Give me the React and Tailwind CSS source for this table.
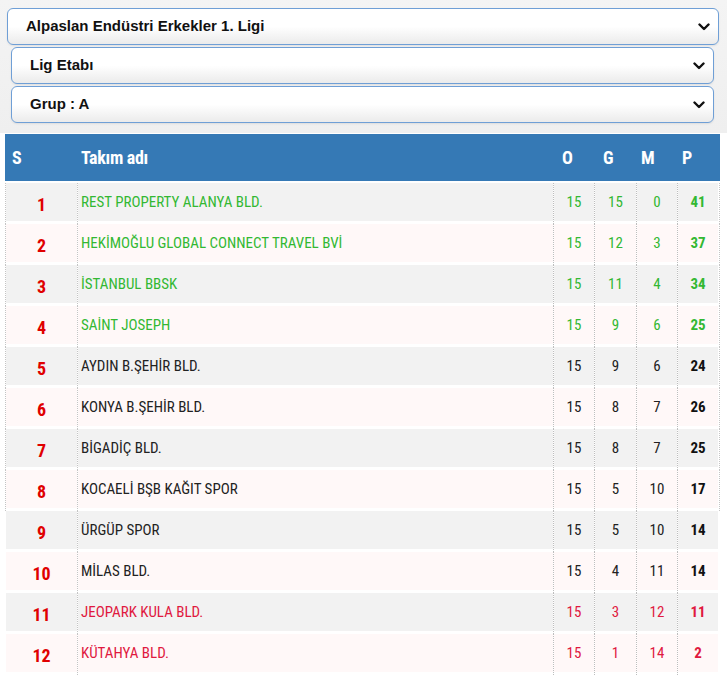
import React from "react";

const takimlar = [
  { s: 1, ad: "REST PROPERTY ALANYA BLD.", o: 15, g: 15, m: 0, p: 41, renk: "yesil" },
  { s: 2, ad: "HEKİMOĞLU GLOBAL CONNECT TRAVEL BVİ", o: 15, g: 12, m: 3, p: 37, renk: "yesil" },
  { s: 3, ad: "İSTANBUL BBSK", o: 15, g: 11, m: 4, p: 34, renk: "yesil" },
  { s: 4, ad: "SAİNT JOSEPH", o: 15, g: 9, m: 6, p: 25, renk: "yesil" },
  { s: 5, ad: "AYDIN B.ŞEHİR BLD.", o: 15, g: 9, m: 6, p: 24, renk: "" },
  { s: 6, ad: "KONYA B.ŞEHİR BLD.", o: 15, g: 8, m: 7, p: 26, renk: "" },
  { s: 7, ad: "BİGADİÇ BLD.", o: 15, g: 8, m: 7, p: 25, renk: "" },
  { s: 8, ad: "KOCAELİ BŞB KAĞIT SPOR", o: 15, g: 5, m: 10, p: 17, renk: "" },
  { s: 9, ad: "ÜRGÜP SPOR", o: 15, g: 5, m: 10, p: 14, renk: "" },
  { s: 10, ad: "MİLAS BLD.", o: 15, g: 4, m: 11, p: 14, renk: "" },
  { s: 11, ad: "JEOPARK KULA BLD.", o: 15, g: 3, m: 12, p: 11, renk: "kirmizi" },
  { s: 12, ad: "KÜTAHYA BLD.", o: 15, g: 1, m: 14, p: 2, renk: "kirmizi" },
];

const Chevron = () => (
  <svg width="12" height="8" viewBox="0 0 12 8">
    <path d="M1.5 1.5 L6 6 L10.5 1.5" fill="none" stroke="#111" strokeWidth="2.4" strokeLinecap="round" strokeLinejoin="round" />
  </svg>
);

const Secim = ({ text, className }) => (
  <div className={"flex items-center justify-between h-[37px] rounded-[6px] border border-[#6f9fd6] bg-gradient-to-b from-white via-white to-[#ebebeb] shadow-[0_1px_2px_rgba(0,0,0,0.08)] pl-[18px] pr-[8px] " + className}>
    <span className="text-[15px] font-bold text-[#111] font-['Liberation_Sans',Arial,sans-serif] font-stretch-normal">{text}</span>
    <Chevron />
  </div>
);

export default function App() {
  return (
    <div className="w-[727px] h-[680px] bg-white font-['Roboto',sans-serif] font-stretch-condensed overflow-hidden">
      <div className="bg-gradient-to-b from-[#f4f4f4] to-[#efefef] pt-[8px] pb-[10px] flex flex-col gap-[2px]">
        <Secim text="Alpaslan Endüstri Erkekler 1. Ligi" className="ml-[7px] mr-[8px]" />
        <Secim text="Lig Etabı" className="ml-[11px] mr-[13px]" />
        <Secim text="Grup : A" className="ml-[11px] mr-[13px]" />
      </div>

      <div className="ml-[5px] w-[715px] h-[47px] mt-[1px] bg-[#3579b5] grid grid-cols-[72px_476px_41px_42px_41px_43px] items-center text-white font-bold text-[18px] tracking-[-0.3px]">
        <div className="pl-[7px]">S</div>
        <div className="pl-[4px]">Takım adı</div>
        <div className="pl-[9px]">O</div>
        <div className="pl-[9px]">G</div>
        <div className="pl-[5px]">M</div>
        <div className="pl-[5px]">P</div>
      </div>

      <div className="ml-[5px] mt-[2px] w-[715px]">
        {takimlar.map((t, i) => {
          const bg = i % 2 === 0 ? "bg-[#f2f2f2]" : "bg-[#fff8f8]";
          const renk =
            t.renk === "yesil" ? "text-[#33b833]" : t.renk === "kirmizi" ? "text-[#e0193f]" : "text-[#222]";
          const dis = i < 8 ? "border-[#c4c4c4]" : "border-transparent";
          const hucre = "h-[41px] pb-[3px] bg-clip-content flex items-center " + bg;
          return (
            <div key={t.s} className="grid grid-cols-[72px_476px_41px_42px_41px_41px_2px] text-[15px]">
              <div className={hucre + " justify-center border-l border-dotted " + dis}>
                <div className="h-[38px] w-full flex items-center justify-center pt-[5px] text-[#e00000] font-bold text-[18px]">{t.s}</div>
              </div>
              <div className={hucre + " border-l border-dotted border-[#c4c4c4]"}>
                <div className={"h-[38px] flex items-center pl-[3px] " + renk}>{t.ad}</div>
              </div>
              {[t.o, t.g, t.m].map((v, k) => (
                <div key={k} className={hucre + " justify-center border-l border-dotted border-[#bdbdbd]"}>
                  <div className={"h-[38px] w-full flex items-center justify-center " + renk}>{v}</div>
                </div>
              ))}
              <div className={hucre + " justify-center border-l border-dotted border-[#bdbdbd]"}>
                <div className={"h-[38px] w-full flex items-center justify-center font-bold " + (t.renk ? renk : "text-[#111]")}>{t.p}</div>
              </div>
              <div className={"h-[41px] border-r border-dotted " + dis}></div>
            </div>
          );
        })}
      </div>
    </div>
  );
}
